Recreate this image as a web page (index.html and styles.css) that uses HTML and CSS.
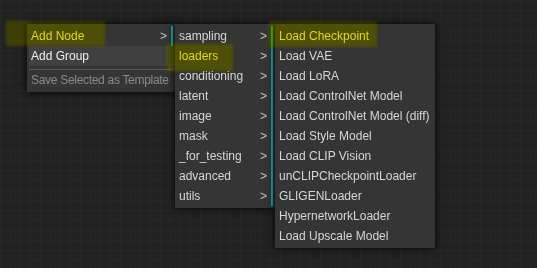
FILE: index.html
```html
<html>
<head>
<title>Context menu</title>
<link rel="stylesheet" href="styles.css">
</head>
<body>
<div class="canvas">
 <div class="menus">
  <div class="menu menu-main">
   <div class="entry sub">Add Node<span class="arrow">&gt;</span></div>
   <div class="entry hover">Add Group</div>
   <div class="sep"></div>
   <div class="entry disabled">Save Selected as Template</div>
  </div>
  <div class="menu menu-cat">
   <div class="entry sub">sampling<span class="arrow">&gt;</span></div>
   <div class="entry sub">loaders<span class="arrow">&gt;</span></div>
   <div class="entry sub">conditioning<span class="arrow">&gt;</span></div>
   <div class="entry sub">latent<span class="arrow">&gt;</span></div>
   <div class="entry sub">image<span class="arrow">&gt;</span></div>
   <div class="entry sub">mask<span class="arrow">&gt;</span></div>
   <div class="entry sub">_for_testing<span class="arrow">&gt;</span></div>
   <div class="entry sub">advanced<span class="arrow">&gt;</span></div>
   <div class="entry sub">utils<span class="arrow">&gt;</span></div>
  </div>
  <div class="menu menu-nodes">
   <div class="entry">Load Checkpoint</div>
   <div class="entry">Load VAE</div>
   <div class="entry">Load LoRA</div>
   <div class="entry">Load ControlNet Model</div>
   <div class="entry">Load ControlNet Model (diff)</div>
   <div class="entry">Load Style Model</div>
   <div class="entry">Load CLIP Vision</div>
   <div class="entry">unCLIPCheckpointLoader</div>
   <div class="entry">GLIGENLoader</div>
   <div class="entry">HypernetworkLoader</div>
   <div class="entry">Load Upscale Model</div>
  </div>
 </div>
 <!-- highlighter marks drawn over the screenshot -->
 <div class="mark mark-node"></div>
 <div class="glow mark-node"></div>
 <div class="mark mark-loaders"></div>
 <div class="glow mark-loaders"></div>
 <div class="mark mark-ckpt"></div>
 <div class="glow mark-ckpt"></div>
</div>
</body>
</html>
```

FILE: styles.css
```css
body {
 margin: 0;
 background-color: #222;
 font-family: "Liberation Sans", Arial, sans-serif;
 font-size: 12px;
 overflow: hidden;
}
.canvas {
 position: relative;
 width: 537px;
 height: 268px;
 background-color: #222;
 background-image:
  linear-gradient(to right, #272727 1px, transparent 1px),
  linear-gradient(to bottom, #272727 1px, transparent 1px);
 background-size: 10px 10px;
}
.menus {
 display: flex;
 align-items: flex-start;
 padding: 24px 0 0 27px;
}
.menu {
 background-color: #353535;
 padding: 2px;
 box-shadow: 0 0 8px #000;
 box-sizing: border-box;
}
.menu-main {
 width: 148px;
}
.menu-cat {
 width: 100px;
}
.menu-nodes {
 width: 160px;
}
.entry {
 height: 20px;
 line-height: 21px;
 padding-left: 2px;
 color: #d6d6d6;
 white-space: nowrap;
 display: flex;
}
.entry.sub {
 border-right: 2px solid #14b4b4;
}
.arrow {
 margin-left: auto;
 padding-right: 4px;
 color: #c4c4c4;
}
.entry.hover {
 background-color: #404040;
 color: #f0f0f0;
 margin-right: 5px;
}
.entry.disabled {
 color: #8a8a8a;
 letter-spacing: -0.3px;
}
.sep {
 height: 1px;
 margin-top: 3px;
 background-color: #5a5a5a;
}
.mark,
.glow {
 position: absolute;
 filter: blur(1.5px);
 pointer-events: none;
}
.mark {
 background-color: #ffff30;
 mix-blend-mode: multiply;
}
.glow {
 background-color: rgba(255, 255, 0, 0.13);
}
.mark-node {
 left: 6px;
 top: 21px;
 width: 99px;
 height: 25px;
}
.mark-loaders {
 left: 167px;
 top: 44px;
 width: 66px;
 height: 27px;
}
.mark-ckpt {
 left: 269px;
 top: 21px;
 width: 108px;
 height: 26px;
}
```
